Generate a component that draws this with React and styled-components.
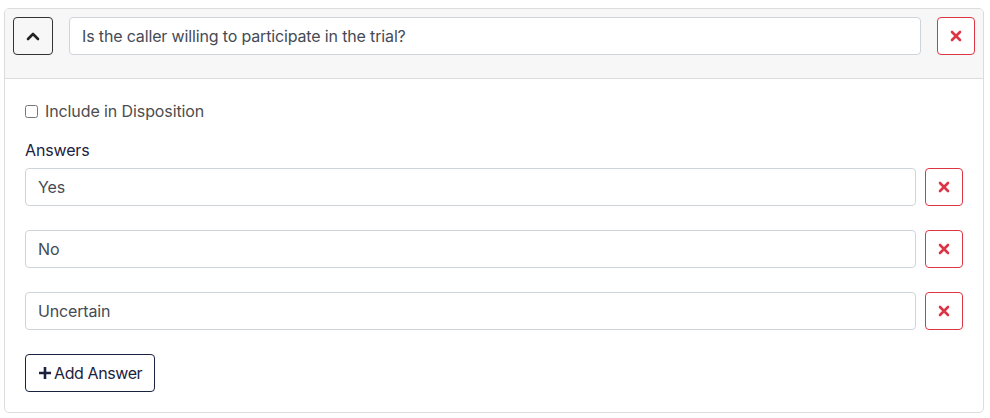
import React, { useState } from "react";
import styled, { createGlobalStyle } from "styled-components";

const GlobalStyle = createGlobalStyle`
    body {
        margin: 0;
        background: #ffffff;
        font-family: Inter, "Noto Sans", sans-serif;
        color: #212529;
    }
`

function CloseGlyph() {
    return (
        <svg width="12" height="12" viewBox="0 0 12 12">
            <path d="M2 2L10 10M10 2L2 10" stroke="#dc3545" strokeWidth="2.6" strokeLinecap="round" />
        </svg>
    )
}

function ChevronUp() {
    return (
        <svg width="14" height="10" viewBox="0 0 14 10">
            <path d="M2 8L7 3L12 8" stroke="#222" strokeWidth="2.6" fill="none" strokeLinecap="round" strokeLinejoin="round" />
        </svg>
    )
}

function App() {
    const [answers, setAnswers] = useState(["Yes", "No", "Uncertain"]);
    const [question, setQuestion] = useState("Is the caller willing to participate in the trial?");

    return (
        <Page>
            <GlobalStyle />
            <Card>
                <Header>
                    <ToggleButton><ChevronUp /></ToggleButton>
                    <TextInput value={question} onChange={e => setQuestion(e.target.value)} />
                    <DeleteButton><CloseGlyph /></DeleteButton>
                </Header>
                <Body>
                    <CheckRow>
                        <Checkbox type="checkbox" />
                        <CheckLabel>Include in Disposition</CheckLabel>
                    </CheckRow>
                    <SectionLabel>Answers</SectionLabel>
                    <AnswerList>
                        {answers.map((a, i) => (
                            <AnswerRow key={i}>
                                <TextInput
                                    value={a}
                                    onChange={e => {
                                        const next = [...answers];
                                        next[i] = e.target.value;
                                        setAnswers(next);
                                    }}
                                />
                                <DeleteButton><CloseGlyph /></DeleteButton>
                            </AnswerRow>
                        ))}
                    </AnswerList>
                    <AddButton>
                        <svg width="14" height="14" viewBox="0 0 14 14">
                            <path d="M7 1V13M1 7H13" stroke="#1b2240" strokeWidth="2.6" />
                        </svg>
                        Add Answer
                    </AddButton>
                </Body>
            </Card>
        </Page>
    )
}
export default App;

const Page = styled.div`
    padding: 8px 6px 5px 4px;
`
const Card = styled.div`
    border: 1px solid #dcdcdc;
    border-radius: 5px;
    overflow: hidden;
    background: #fff;
`
const Header = styled.div`
    display: flex;
    align-items: center;
    gap: 16px;
    padding: 8px 8px 23px 8px;
    background: #f7f7f7;
    border-bottom: 1px solid #dcdcdc;
`
const ToggleButton = styled.button`
    flex: none;
    width: 40px;
    height: 38px;
    display: flex;
    align-items: center;
    justify-content: center;
    border: 1px solid #333;
    border-radius: 4px;
    background: transparent;
    padding: 0;
`
const TextInput = styled.input`
    flex: 1;
    min-width: 0;
    height: 38px;
    box-sizing: border-box;
    padding: 0 12px;
    border: 1px solid #cfd4da;
    border-radius: 4px;
    background: #fff;
    font-family: Inter, "Noto Sans", sans-serif;
    font-size: 16px;
    letter-spacing: -0.15px;
    color: #454b55;
    outline: none;
`
const DeleteButton = styled.button`
    flex: none;
    width: 38px;
    height: 38px;
    display: flex;
    align-items: center;
    justify-content: center;
    border: 1px solid #dc3545;
    border-radius: 4px;
    background: #fff;
    padding: 0;
`
const Body = styled.div`
    padding: 23px 20px 20px 20px;
`
const CheckRow = styled.label`
    display: flex;
    align-items: center;
    gap: 7px;
    line-height: 19px;
`
const Checkbox = styled.input`
    margin: 0;
    width: 13px;
    height: 13px;
`
const CheckLabel = styled.span`
    font-size: 16px;
    letter-spacing: -0.1px;
    color: #4d4d4d;
`
const SectionLabel = styled.div`
    margin-top: 20px;
    margin-bottom: 8px;
    font-size: 16px;
    line-height: 19px;
    letter-spacing: -0.15px;
    color: #1b2240;
`
const AnswerList = styled.div`
    display: flex;
    flex-direction: column;
    gap: 24px;
`
const AnswerRow = styled.div`
    display: flex;
    gap: 9px;
`
const AddButton = styled.button`
    margin-top: 24px;
    height: 38px;
    display: flex;
    align-items: center;
    gap: 2px;
    padding: 0 12px 0 12px;
    border: 1px solid #1b2240;
    border-radius: 4px;
    background: #fff;
    font-family: Inter, "Noto Sans", sans-serif;
    font-size: 16px;
    letter-spacing: -0.4px;
    color: #1b2240;
`
